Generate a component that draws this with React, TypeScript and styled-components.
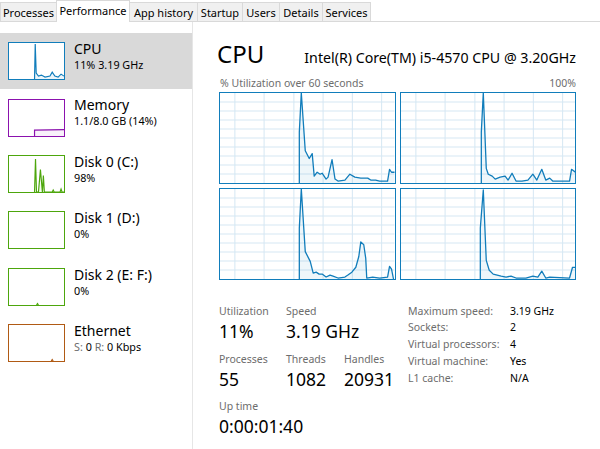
import React from "react";
import styled, { createGlobalStyle } from "styled-components";

const GlobalStyle = createGlobalStyle`
  html, body {
    margin: 0;
    padding: 0;
    background: #ffffff;
  }
  body {
    font-family: "Noto Sans", "Open Sans", sans-serif;
    color: #000000;
  }
`;

const CPU_BLUE = "#117dbb";

const Window = styled.div`
  width: 600px;
  height: 449px;
  overflow: hidden;
  display: flex;
  flex-direction: column;
  background: #ffffff;
`;

const TabBar = styled.div`
  height: 22px;
  display: flex;
  align-items: flex-end;
  flex-shrink: 0;
`;

const Tab = styled.div<{ $w: number; $active: boolean }>`
  width: ${(p) => p.$w}px;
  height: ${(p) => (p.$active ? 22 : 20)}px;
  box-sizing: border-box;
  display: flex;
  align-items: center;
  justify-content: center;
  font-size: 11px;
  color: #000;
  background: ${(p) => (p.$active ? "#ffffff" : "#f0f0f0")};
  border: 1px solid #d9d9d9;
  border-bottom: ${(p) => (p.$active ? "none" : "1px solid #d9d9d9")};
  margin-right: -1px;
  padding-bottom: ${(p) => (p.$active ? 3 : 0)}px;
  white-space: nowrap;
`;

const TabFiller = styled.div`
  flex: 1;
  height: 20px;
  border-bottom: 1px solid #d9d9d9;
`;

const Body = styled.div`
  flex: 1;
  display: flex;
`;

const Sidebar = styled.div`
  width: 192px;
  padding-top: 11px;
  border-right: 1px solid #e6e6e6;
  flex-shrink: 0;
`;

const Device = styled.div<{ $active: boolean }>`
  height: 56.4px;
  display: flex;
  align-items: center;
  padding-left: 8px;
  background: ${(p) => (p.$active ? "#d9d9d9" : "transparent")};
`;

const Thumb = styled.div<{ $color: string }>`
  width: 57px;
  height: 38px;
  box-sizing: border-box;
  border: 1.5px solid ${(p) => p.$color};
  background: #ffffff;
  flex-shrink: 0;
  svg {
    display: block;
  }
`;

const DeviceInfo = styled.div`
  align-self: flex-start;
  margin-top: 7px;
  margin-left: 9px;
  display: flex;
  flex-direction: column;
`;

const DeviceName = styled.div`
  font-size: 14px;
  line-height: 18px;
`;

const DeviceSub = styled.div`
  font-size: 10.8px;
  line-height: 14px;
`;

const Dim = styled.span`
  color: #6d6d6d;
`;

const Main = styled.div`
  width: 357px;
  margin-left: 26px;
  padding-top: 17px;
  display: flex;
  flex-direction: column;
`;

const Header = styled.div`
  display: flex;
  align-items: baseline;
  justify-content: space-between;
  height: 30px;
`;

const Title = styled.div`
  font-size: 24px;
  line-height: 30px;
  margin-left: -2px;
`;

const Model = styled.div`
  font-size: 14.2px;
  line-height: 18px;
`;

const Caption = styled.div`
  display: flex;
  justify-content: space-between;
  font-size: 10.5px;
  line-height: 14px;
  color: #6d6d6d;
  margin-top: 7px;
  padding-left: 1px;
`;

const GraphGrid = styled.div`
  margin-top: 2px;
  display: grid;
  grid-template-columns: 1fr 1fr;
  grid-template-rows: 92px 92px;
  gap: 4px;
`;

const GraphBox = styled.div`
  border: 1.5px solid ${CPU_BLUE};
  background: #ffffff;
  svg {
    display: block;
  }
`;

const StatsArea = styled.div`
  margin-top: 23px;
  display: flex;
`;

const LiveStats = styled.div`
  width: 189px;
  display: flex;
  flex-direction: column;
  gap: 7.5px;
`;

const StatRow = styled.div`
  display: flex;
`;

const Stat = styled.div<{ $w?: number }>`
  width: ${(p) => (p.$w ? `${p.$w}px` : "auto")};
  display: flex;
  flex-direction: column;
`;

const StatLabel = styled.div`
  font-size: 10.5px;
  line-height: 16px;
  color: #6d6d6d;
`;

const StatValue = styled.div`
  font-size: 17.5px;
  line-height: 24px;
`;

const SpecTable = styled.div`
  display: grid;
  grid-template-columns: 102px auto;
  grid-auto-rows: 16.8px;
  align-content: start;
  font-size: 10.5px;
  line-height: 16.8px;
  margin-top: -0.5px;
`;

const SpecLabel = styled.div`
  color: #6d6d6d;
`;

const SpecValue = styled.div`
  color: #000;
`;

type Pt = [number, number];

const tabs = [
  { label: "Processes", w: 57 },
  { label: "Performance", w: 74, active: true },
  { label: "App history", w: 69 },
  { label: "Startup", w: 46 },
  { label: "Users", w: 38 },
  { label: "Details", w: 44 },
  { label: "Services", w: 49 },
];

const graphs: Pt[][] = [
  [
    [80, 92], [80, 40], [82, 0], [86, 59], [90, 67], [93, 62], [95, 85], [98, 81], [101, 83],
    [103, 82], [107, 88], [109, 86], [113, 68], [116, 88], [119, 90], [126, 89],
    [131, 83], [136, 86], [142, 87], [149, 87], [152, 89], [157, 89], [161, 90],
    [169, 90], [171, 78], [173, 81], [176, 81],
  ],
  [
    [81, 92], [81, 40], [83, 0], [86, 77], [88, 83], [92, 85], [95, 88], [100, 86], [105, 85],
    [108, 89], [112, 82], [116, 90], [122, 90], [128, 89], [133, 83], [137, 89],
    [142, 78], [146, 89], [150, 87], [153, 90], [170, 90], [172, 78], [176, 81],
  ],
  [
    [80, 92], [80, 40], [82, 0], [86, 64], [91, 74], [94, 86], [97, 85], [100, 87], [103, 87],
    [107, 90], [111, 88], [114, 89], [119, 91], [126, 90], [129, 88], [133, 85],
    [137, 80], [140, 69], [142, 54], [145, 57], [147, 71], [148, 91], [154, 90],
    [161, 91], [169, 90], [171, 79], [173, 82], [175, 92],
  ],
  [
    [80, 92], [80, 40], [83, 1], [86, 73], [89, 83], [93, 87], [97, 88], [101, 89], [106, 90],
    [111, 89], [116, 91], [126, 91], [133, 89], [138, 90], [142, 84], [146, 91],
    [150, 90], [170, 91], [173, 80], [176, 80],
  ],
];

const devices: {
  name: string;
  sub: React.ReactNode;
  color: string;
  fill: string;
  pts: Pt[];
  active?: boolean;
}[] = [
  {
    name: "CPU",
    sub: "11% 3.19 GHz",
    color: CPU_BLUE,
    fill: "rgba(17,125,187,0.08)",
    active: true,
    pts: [
      [26, 37], [26.7, 1], [27.7, 31], [30, 34], [33, 33], [36.7, 35], [41.7, 34],
      [44, 30], [46.7, 34], [50, 35], [53, 32], [56, 34],
    ],
  },
  {
    name: "Memory",
    sub: "1.1/8.0 GB (14%)",
    color: "#8b12ae",
    fill: "rgba(139,18,174,0.06)",
    pts: [[26, 37], [26, 31], [56, 30.5]],
  },
  {
    name: "Disk 0 (C:)",
    sub: "98%",
    color: "#4da60c",
    fill: "rgba(77,166,12,0.06)",
    pts: [
      [26, 37], [27, 3], [28, 37], [30, 37], [32, 14], [34, 37], [35, 20], [36, 37],
      [44, 37], [45, 35], [46, 37], [52, 37], [53, 34], [54, 37], [56, 37],
    ],
  },
  {
    name: "Disk 1 (D:)",
    sub: "0%",
    color: "#4da60c",
    fill: "none",
    pts: [],
  },
  {
    name: "Disk 2 (E: F:)",
    sub: "0%",
    color: "#4da60c",
    fill: "none",
    pts: [[28, 37], [29, 35.5], [30, 37]],
  },
  {
    name: "Ethernet",
    sub: (
      <>
        <Dim>S:</Dim> 0 <Dim>R:</Dim> 0 Kbps
      </>
    ),
    color: "#b05a14",
    fill: "none",
    pts: [[43, 37], [44, 35.5], [45, 37]],
  },
];

const specs = [
  { label: "Maximum speed:", value: "3.19 GHz" },
  { label: "Sockets:", value: "2" },
  { label: "Virtual processors:", value: "4" },
  { label: "Virtual machine:", value: "Yes" },
  { label: "L1 cache:", value: "N/A" },
];

const toStr = (pts: Pt[]) => pts.map((p) => p.join(",")).join(" ");

function Graph({ pts }: { pts: Pt[] }) {
  const hLines = Array.from({ length: 9 }, (_, i) => (i + 1) * 9.2);
  const vLines = [15, 44.5, 74.5, 104, 133.5, 163];
  const fillPts: Pt[] = [...pts, [pts[pts.length - 1][0], 92], [pts[0][0], 92]];
  return (
    <GraphBox>
      <svg width="100%" height="100%" viewBox="0 0 176 92" preserveAspectRatio="none">
        {hLines.map((y) => (
          <line key={"h" + y} x1={0} x2={176} y1={y} y2={y} stroke="#d4e7f3" strokeWidth={1} />
        ))}
        {vLines.map((x) => (
          <line key={"v" + x} x1={x} x2={x} y1={0} y2={92} stroke="#d4e7f3" strokeWidth={1} />
        ))}
        <polygon points={toStr(fillPts)} fill="rgba(17,125,187,0.07)" />
        <polyline points={toStr(pts)} fill="none" stroke={CPU_BLUE} strokeWidth={1.3} strokeLinejoin="round" />
      </svg>
    </GraphBox>
  );
}

function Sparkline({ pts, color, fill }: { pts: Pt[]; color: string; fill: string }) {
  return (
    <Thumb $color={color}>
      <svg width="100%" height="100%" viewBox="0 0 56 37" preserveAspectRatio="none">
        {pts.length > 0 && (
          <>
            <polygon points={toStr([...pts, [pts[pts.length - 1][0], 37], [pts[0][0], 37]])} fill={fill} />
            <polyline points={toStr(pts)} fill="none" stroke={color} strokeWidth={1.2} />
          </>
        )}
      </svg>
    </Thumb>
  );
}

export default function App() {
  return (
    <>
      <GlobalStyle />
      <Window>
        <TabBar>
          {tabs.map((t) => (
            <Tab key={t.label} $w={t.w} $active={!!t.active}>
              {t.label}
            </Tab>
          ))}
          <TabFiller />
        </TabBar>
        <Body>
          <Sidebar>
            {devices.map((d) => (
              <Device key={d.name} $active={!!d.active}>
                <Sparkline pts={d.pts} color={d.color} fill={d.fill} />
                <DeviceInfo>
                  <DeviceName>{d.name}</DeviceName>
                  <DeviceSub>{d.sub}</DeviceSub>
                </DeviceInfo>
              </Device>
            ))}
          </Sidebar>
          <Main>
            <Header>
              <Title>CPU</Title>
              <Model>Intel(R) Core(TM) i5-4570 CPU @ 3.20GHz</Model>
            </Header>
            <Caption>
              <span>% Utilization over 60 seconds</span>
              <span>100%</span>
            </Caption>
            <GraphGrid>
              {graphs.map((g, i) => (
                <Graph key={i} pts={g} />
              ))}
            </GraphGrid>
            <StatsArea>
              <LiveStats>
                <StatRow>
                  <Stat $w={67}>
                    <StatLabel>Utilization</StatLabel>
                    <StatValue>11%</StatValue>
                  </Stat>
                  <Stat>
                    <StatLabel>Speed</StatLabel>
                    <StatValue>3.19 GHz</StatValue>
                  </Stat>
                </StatRow>
                <StatRow>
                  <Stat $w={67}>
                    <StatLabel>Processes</StatLabel>
                    <StatValue>55</StatValue>
                  </Stat>
                  <Stat $w={58}>
                    <StatLabel>Threads</StatLabel>
                    <StatValue>1082</StatValue>
                  </Stat>
                  <Stat>
                    <StatLabel>Handles</StatLabel>
                    <StatValue>20931</StatValue>
                  </Stat>
                </StatRow>
                <StatRow>
                  <Stat>
                    <StatLabel>Up time</StatLabel>
                    <StatValue>0:00:01:40</StatValue>
                  </Stat>
                </StatRow>
              </LiveStats>
              <SpecTable>
                {specs.map((s) => (
                  <React.Fragment key={s.label}>
                    <SpecLabel>{s.label}</SpecLabel>
                    <SpecValue>{s.value}</SpecValue>
                  </React.Fragment>
                ))}
              </SpecTable>
            </StatsArea>
          </Main>
        </Body>
      </Window>
    </>
  );
}
